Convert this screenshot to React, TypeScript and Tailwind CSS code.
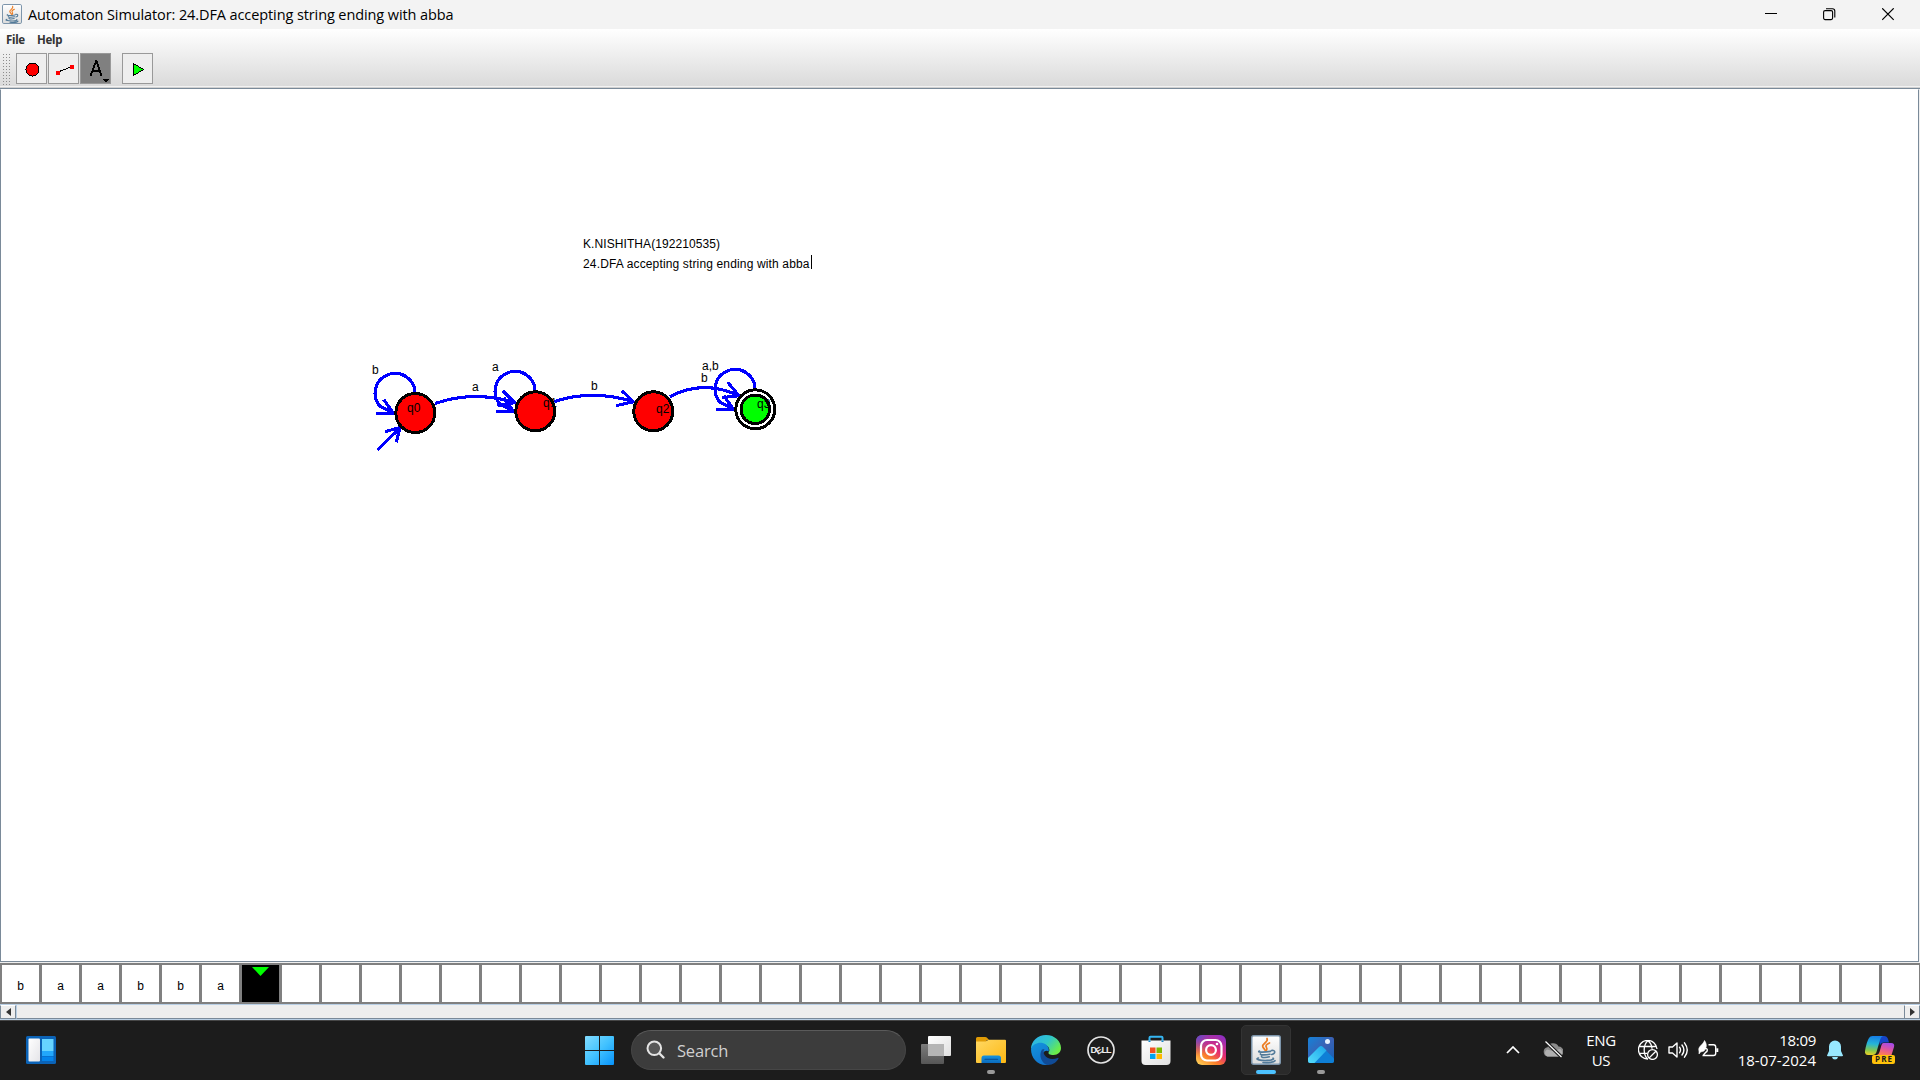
import React from "react";

const ui = "font-['Open_Sans','Noto_Sans',sans-serif]";
const tape = ["b", "a", "a", "b", "b", "a"];

function JavaCup({ size }: { size: number }) {
  return (
    <svg width={size} height={size} viewBox="0 0 30 30" className="shrink-0">
      <defs>
        <linearGradient id="javaBg" x1="0" y1="0" x2="0" y2="1">
          <stop offset="0" stopColor="#ffffff" />
          <stop offset="1" stopColor="#dcdcdc" />
        </linearGradient>
      </defs>
      <rect x=".75" y=".75" width="28.5" height="28.5" rx="2" fill="url(#javaBg)" stroke="#7d95ab" strokeWidth="1.5" />
      <g fill="none" stroke="#ec7d23" strokeWidth="1.7" strokeLinecap="round">
        <path d="M16 3.5c2 3.5-5 5-4.300 8 .3 1.500 2 2.500 2.600 4" />
        <path d="M18.500 8c-3 1.500-4.500 2.500-3 4.500.8 1 .5 2-.2 3" />
      </g>
      <g fill="none" stroke="#527a99" strokeWidth="1.6" strokeLinecap="round">
        <path d="M8.500 16c-3 1.200 3 1.700 11 .4M20.500 15.500c4-.8 4.500 3 .3 4" />
        <path d="M9.500 18.800c-1 1.400 5 1.400 9.500.4M10.500 21.300c-.5 1.600 5 1.400 7.800.5" />
        <path d="M7.500 23c-5 1.500 3 2.700 9 2.400 5-.2 7-1.200 5.500-2.200M12 27.500c5 .5 11-.3 12-1.800" />
      </g>
    </svg>
  );
}

function TitleBar() {
  return (
    <header className={`flex h-[29px] shrink-0 items-start bg-[#f3f3f3] pl-[2px] pt-[4px] text-black ${ui}`}>
      <JavaCup size={20} />
      <span className="ml-[6px] w-[428px] whitespace-nowrap pt-px text-[14.500px] leading-[20px] tracking-[-0.1px]">
        Automaton Simulator: 24.DFA accepting string ending with abba
      </span>
      <div className="ml-auto flex items-center pr-[25px] pt-[4px]">
        <svg width="13" height="13" className="mr-[45px]"><path d="M0 5.500h12" stroke="#000" strokeWidth="1" /></svg>
        <svg width="13" height="13" className="mr-[46px]" fill="none" stroke="#000" strokeWidth="1.100">
          <rect x=".6" y="2.600" width="9" height="9" rx="1.500" />
          <path d="M3 .7h6.500q2.300 0 2.300 2.300v6.500" />
        </svg>
        <svg width="13" height="13"><path d="M.2.3l11.500 11.500M11.700.3L.2 11.800" stroke="#000" strokeWidth="1.200" /></svg>
      </div>
    </header>
  );
}

function Tool({ active, children }: { active?: boolean; children: React.ReactNode }) {
  return (
    <button className={`h-[31px] w-[31px] border border-[#999999] ${active ? "bg-[#808080]" : "bg-[#eeeeee]"}`}>
      <svg width="29" height="29" shapeRendering="crispEdges">{children}</svg>
    </button>
  );
}

function Toolbar() {
  return (
    <div className="flex h-[60px] shrink-0 flex-col border-b border-[#7a8a99] bg-gradient-to-b from-white to-[#d9d9d9]">
      <nav className="flex h-[24px] gap-[12px] pl-[6px] pt-px font-['Noto_Sans','Open_Sans',sans-serif] text-[11.500px] font-bold leading-[20px] tracking-[-0.3px] text-[#333333]">
        <span className="w-[19px]">File</span>
        <span>Help</span>
      </nav>
      <div className="flex h-[32px] pl-[2px]">
        <div className="mr-[4px] h-[32px] w-[10px] bg-[radial-gradient(#8d8d8d_0.7px,transparent_0.8px)] bg-[size:3px_3px]" />
        <div className="flex gap-px">
          <Tool>
            <circle cx="15.500" cy="15.500" r="6.500" fill="#f00" stroke="#000" />
          </Tool>
          <Tool>
            <path d="M9 18L22 13" stroke="#000" />
            <path d="M7 17h4v4H7zM21 11h4v4h-4z" fill="#f00" />
          </Tool>
          <Tool active>
            <path d="M9.500 22L15 7h.5L20.500 22M11.500 17h7" stroke="#000" strokeWidth="1.700" fill="none" />
            <path d="M22 25h6l-2 3h-2z" fill="#000" />
          </Tool>
        </div>
        <div className="ml-[11px]">
          <Tool>
            <path d="M10.500 9.500v12L20.500 15.500z" fill="#0f0" stroke="#000" />
          </Tool>
        </div>
      </div>
      <div className="mt-px h-px bg-[#f2f2f2]" />
      <div className="h-px bg-[#d0d0d0]" />
    </div>
  );
}

function Loop({ x, y }: { x: number; y: number }) {
  return (
    <path d={`M${x + 0.5} ${y - 19.500}A20 20 0 1 0 ${x - 34.5} ${y - 6.500}L${x - 21} ${y + 0.3}M${x - 39} ${y + 0.3}h18L${x - 31} ${y - 13.500}`} />
  );
}

function Diagram() {
  return (
    <svg width="1918" height="871" viewBox="1 90 1918 871" className="block">
      <g fill="none" stroke="#00f" strokeWidth="3.100" strokeLinejoin="round" shapeRendering="crispEdges">
        <Loop x={414.6} y={413} />
        <Loop x={534.6} y={411} />
        <Loop x={754.6} y={409} />
        <path d="M435 403.500Q474 390 515 402.700M502.500 390.700L515 402.700L497.500 405.500" />
        <path d="M554.500 401.500Q593 389 633.500 401.700M621.700 390.700L633.500 401.700L616 405.700" />
        <path d="M670 396.700Q703 379 739 395.700M727.700 382.300L739 395.700L722 397.700" />
        <path d="M377.300 450L400 428M385 431.700L400 427.500L396.300 442.300" />
      </g>
      <g fill="#f00" stroke="#000" strokeWidth="3" shapeRendering="crispEdges">
        <circle cx="415.300" cy="413" r="19.500" />
        <circle cx="535.300" cy="411.300" r="19.500" />
        <circle cx="653.300" cy="411.300" r="19.500" />
        <circle cx="755.300" cy="409.300" r="19.500" fill="#fff" />
        <circle cx="755.300" cy="409.300" r="14.300" fill="#0f0" />
      </g>
      <g className="font-['Liberation_Sans',Arial,sans-serif] text-[12px]" fill="#000">
        <text x="372" y="374">b</text>
        <text x="492" y="371">a</text>
        <text x="472" y="391">a</text>
        <text x="591" y="390">b</text>
        <text x="702" y="370">a,b</text>
        <text x="701" y="382">b</text>
        <text x="407" y="412">q0</text>
        <text x="543" y="407" textLength="14">q1</text>
        <text x="656" y="413">q2</text>
        <text x="757" y="408">q3</text>
        <text x="583" y="248" textLength="137">K.NISHITHA(192210535)</text>
        <text x="583" y="268" textLength="226.500">24.DFA accepting string ending with abba</text>
        <path d="M811 255h1v14h-1z" />
      </g>
    </svg>
  );
}

function Tape() {
  return (
    <div className="flex h-[41px] shrink-0 overflow-hidden bg-[#808080] py-[2px] pl-[2px]">
      {Array.from({ length: 48 }, (_, i) => (
        <div
          key={i}
          className={`mr-[3px] flex h-[37px] w-[37px] shrink-0 justify-center font-['Liberation_Sans',Arial,sans-serif] text-[12px] leading-[42px] text-black ${i === 6 ? "bg-black" : "bg-white"}`}
        >
          {i === 6 ? (
            <svg width="17" height="9" className="mt-[2px]"><path d="M0 0h17L8.500 9z" fill="#0f0" /></svg>
          ) : (
            tape[i]
          )}
        </div>
      ))}
    </div>
  );
}

function ScrollBar() {
  return (
    <div className="flex h-[16px] shrink-0 border-b border-t border-[#b8cfe5] bg-[#eeeeee]">
      <div className="flex w-[16px] items-center justify-center border border-b-[#7a8a99] border-l-[#7a8a99] border-r-[#7a8a99] border-t-white">
        <svg width="5" height="8"><path d="M5 0v8L0 4z" fill="#333" /></svg>
      </div>
      <div className="flex-1 border-b border-l border-b-[#7a8a99] border-l-[#b8cfe5]" />
      <div className="flex w-[16px] items-center justify-center border border-b-[#7a8a99] border-l-[#7a8a99] border-r-[#7a8a99] border-t-white">
        <svg width="5" height="8"><path d="M0 0v8l5-4z" fill="#333" /></svg>
      </div>
    </div>
  );
}

function Slot({ children, mark }: { children: React.ReactNode; mark?: boolean }) {
  return (
    <div className="relative flex w-[55px] items-center justify-center pb-px">
      {children}
      {mark && <div className="absolute bottom-[6px] h-[4px] w-[8px] rounded-full bg-[#999999]" />}
    </div>
  );
}

function Taskbar() {
  return (
    <footer className={`flex h-[60px] shrink-0 border-t border-[#464646] bg-[#1c1c1c] text-white ${ui}`}>
      <div className="flex w-[572px] items-center pb-px pl-[26px]">
        <svg width="30" height="28">
          <defs>
            <linearGradient id="widgetPane" x1="0" y1="0" x2="1" y2="1"><stop stopColor="#fff" /><stop offset="1" stopColor="#e4e4e8" /></linearGradient>
          </defs>
          <rect width="30" height="28" rx="1.500" fill="#0b63b7" />
          <rect x="2.500" y="2.500" width="11.500" height="23" rx="1" fill="url(#widgetPane)" />
          <path d="M16 3h11.500v12H16z" fill="#66d4ff" />
          <path d="M16 15h11.500v5H16z" fill="#22a7fb" />
          <path d="M16 20.500h11.500V25H16z" fill="#0483ea" />
        </svg>
      </div>
      <Slot>
        <svg width="29" height="29">
          <defs>
            <linearGradient id="winBlue" gradientUnits="userSpaceOnUse" x1="0" y1="0" x2="29" y2="29"><stop stopColor="#82dcff" /><stop offset=".5" stopColor="#42c2ff" /><stop offset="1" stopColor="#0793fb" /></linearGradient>
          </defs>
          <path fill="url(#winBlue)" d="M0 1q0-1 1-1h13v14H0zM15 0h13q1 0 1 1v13H15zM0 15h14v14H1q-1 0-1-1zM15 15h14v13q0 1-1 1H15z" />
        </svg>
      </Slot>
      <div className="ml-[4px] mr-[2px] mt-[9px] flex h-[40px] w-[275px] items-center rounded-full border border-[#464646] border-t-[#5a5a5a] bg-[#3c3c3c] pl-[14px]">
        <svg width="20" height="20" fill="none" strokeLinecap="round">
          <circle cx="8.300" cy="8.300" r="6.800" stroke="#e4e4e4" strokeWidth="2" fill="#575757" />
          <path d="M13.500 13.500l4 4" stroke="#e4e4e4" strokeWidth="2.400" />
        </svg>
        <span className="ml-[11px] pt-px text-[16.500px] leading-[38px] tracking-[-0.2px] text-[#d0d0d0]">Search</span>
      </div>
      <Slot>
        <svg width="30" height="28">
          <defs>
            <linearGradient id="tvBack" x1="0" y1="0" x2="0" y2="1"><stop stopColor="#7c7c7c" /><stop offset="1" stopColor="#565656" /></linearGradient>
            <linearGradient id="tvFront" x1="0" y1="0" x2="1" y2="1"><stop stopColor="#fff" /><stop offset="1" stopColor="#e0e0e0" /></linearGradient>
          </defs>
          <rect y="8" width="23" height="20" rx="1" fill="url(#tvBack)" />
          <rect x="7" width="23" height="20" rx="1" fill="url(#tvFront)" />
          <path d="M7 8h16v12H7z" fill="#b5b5b5" />
        </svg>
      </Slot>
      <Slot mark>
        <svg width="30" height="28">
          <defs>
            <linearGradient id="folder" x1="0" y1="0" x2="1" y2="1"><stop stopColor="#ffd863" /><stop offset="1" stopColor="#fdb813" /></linearGradient>
            <linearGradient id="folderBlue" x1="0" y1="0" x2="0" y2="1"><stop stopColor="#1593e0" /><stop offset="1" stopColor="#0b6bbd" /></linearGradient>
          </defs>
          <path d="M0 2.500Q0 1 1.500 1H9q1.500 0 2.500 1.200L13 4h-2L9 7H0z" fill="#e09b06" />
          <path d="M0 5.500h9.500l3-1.800H29q1 0 1 1V26q0 1-1 1H1q-1 0-1-1z" fill="url(#folder)" />
          <path d="M5.500 27v-5q0-2.500 2.500-2.500h14.500Q25 19.500 25 22v5z" fill="url(#folderBlue)" />
          <path d="M9 23.300h12.500" stroke="#07569f" strokeWidth="1.300" strokeLinecap="round" />
        </svg>
      </Slot>
      <Slot>
        <svg width="30" height="30" viewBox="0 0 30 30">
          <defs>
            <linearGradient id="edgeTop" x1="0" y1="0" x2="1" y2=".6"><stop stopColor="#2baef0" /><stop offset=".55" stopColor="#30c6c9" /><stop offset="1" stopColor="#6bed48" /></linearGradient>
            <linearGradient id="edgeLow" x1="0" y1="0" x2=".5" y2="1"><stop stopColor="#1295dd" /><stop offset="1" stopColor="#1275cf" /></linearGradient>
          </defs>
          <path d="M0 14C0 6 7 0 15 0c9 0 15 6.500 15 13 0 4-3 7-7.500 7-4 0-5.500-1.500-5-2.500 1.800-2 1-5.800-3-7.500C9 8 3 9 0 14z" fill="url(#edgeTop)" />
          <path d="M0 14C2 8 10 6 15 9.500c2.500 2 3.500 5 2.300 7.200-.8-2-5.300-1-6 3.300C10.500 25 14 29 18.500 29.500 8 32 0 24 0 14z" fill="url(#edgeLow)" />
          <path d="M11 14.500C7 20 11 29.500 17 30c5 0 9-3.500 10.500-6.500.3-.8-.3-1-1-.6C22 25 16 24 13.500 20c-1.300-2-1.200-4 0-6z" fill="#104b96" />
        </svg>
      </Slot>
      <Slot>
        <svg width="30" height="30">
          <circle cx="15" cy="15" r="13" fill="none" stroke="#e4e4e4" strokeWidth="1.700" />
          <g className="font-['Liberation_Sans',sans-serif] text-[9px] font-bold" fill="#eee">
            <text x="4.500" y="18.300">D</text>
            <text x="10" y="18.300" transform="rotate(-32 13.500 15.500)">E</text>
            <text x="15.500" y="18.300" textLength="10">LL</text>
          </g>
        </svg>
      </Slot>
      <Slot>
        <svg width="30" height="30">
          <path d="M8.500 7V2.800q0-1 1-1h11q1 0 1 1V7" fill="none" stroke="#35b6f2" strokeWidth="2" />
          <path d="M.5 5.500h29V26q0 4-4 4H4.500q-4 0-4-4z" fill="url(#tvFront)" />
          <path d="M7.500 5.500h2V7h-2zM20.500 5.500h2V7h-2z" fill="#1884c4" />
          <path d="M9 12.500h5.500V18H9z" fill="#f25022" />
          <path d="M15.500 12.500H21V18h-5.500z" fill="#7fba00" />
          <path d="M9 18.800h5.500v5.200H9z" fill="#00a4ef" />
          <path d="M15.500 18.800H21v5.200h-5.500z" fill="#ffb900" />
        </svg>
      </Slot>
      <Slot>
        <svg width="30" height="30">
          <defs>
            <linearGradient id="igA" x1=".1" y1="1" x2=".8" y2="0"><stop stopColor="#ffd35a" /><stop offset=".3" stopColor="#fb8128" /><stop offset=".6" stopColor="#e42c73" /><stop offset="1" stopColor="#8f2fc0" /></linearGradient>
            <radialGradient id="igB" cx="0" cy="0" r=".7"><stop stopColor="#4655d8" /><stop offset="1" stopColor="#8f2fc0" stopOpacity="0" /></radialGradient>
          </defs>
          <rect width="30" height="30" rx="6" fill="url(#igA)" />
          <rect width="30" height="30" rx="6" fill="url(#igB)" />
          <g fill="none" stroke="#fff" strokeWidth="2.200"><rect x="5" y="5" width="20.500" height="20.500" rx="6" /><circle cx="15" cy="15" r="4.900" /></g>
          <circle cx="21" cy="9" r="1.300" fill="#fff" />
        </svg>
      </Slot>
      <Slot>
        <div className="relative flex h-[50px] w-[50px] items-center justify-center rounded-[5px] border border-[#333333] bg-[#2a2a2a]">
          <JavaCup size={30} />
          <div className="absolute bottom-0 h-[4px] w-[20px] rounded-full bg-[#4cc2ff]" />
        </div>
      </Slot>
      <Slot mark>
        <svg width="26" height="26">
          <defs>
            <linearGradient id="photoBg" x1="0" y1="0" x2="1" y2="1"><stop stopColor="#1482d8" /><stop offset=".5" stopColor="#3b61b4" /><stop offset="1" stopColor="#1260b4" /></linearGradient>
            <linearGradient id="photoHill" x1="0" y1="1" x2="1" y2="0"><stop stopColor="#55dcfb" /><stop offset="1" stopColor="#1ba6ea" /></linearGradient>
          </defs>
          <rect width="26" height="26" rx="2.500" fill="url(#photoBg)" />
          <path d="M1 25L11 10.500q2-2 4 0L26 21.500V24q0 2-2 2H2z" fill="#0e7fd6" />
          <path d="M0 21L11 10q2-2 4 0l3.500 3.500L6.500 26H2q-2 0-2-2z" fill="url(#photoHill)" />
          <circle cx="19.500" cy="4.500" r="2.500" fill="#e5f2ff" />
        </svg>
      </Slot>
      <div className="ml-auto flex items-center pb-[2px] pr-[25px]">
        <svg width="14" height="8" className="mr-[23px]"><path d="M1 7l6-6 6 6" fill="none" stroke="#fff" strokeWidth="1.700" /></svg>
        <svg width="20" height="17" className="mr-[20px]">
          <path d="M5 15.500a4.700 4.700 0 0 1-.5-9.300A6 6 0 0 1 15.500 5.500 5 5 0 0 1 15.500 15.500z" fill="#8c8c8c" />
          <path d="M4 15.500a4 4 0 0 1 0-7l6 1.500 7-2a4 4 0 0 1-1.500 7.500z" fill="#b0b0b0" />
          <path d="M2.500.5l16 15.500" stroke="#1c1c1c" strokeWidth="3.500" /><path d="M2.500.5l16 15.500" stroke="#fff" strokeWidth="1.200" />
        </svg>
        <div className="mr-[19px] w-[36px] text-center text-[15px] leading-[20px] tracking-[-0.3px]">ENG<br />US</div>
        <svg width="20" height="20" className="mr-[10px]" fill="none" stroke="#fff" strokeWidth="1.300">
          <path d="M10 19A9.300 9.300 0 1 1 19 9M1.500 6.500h17M1.500 13.300H9M9.500 19C5 14 5 5 10 .8c3 2.500 4 5.500 4 8" />
          <circle cx="14.500" cy="14.500" r="4.900" fill="#1c1c1c" /><path d="M11.200 17.900l6.700-6.700" />
        </svg>
        <svg width="20" height="20" className="mr-[10px]" fill="none" stroke="#fff" strokeWidth="1.400" strokeLinejoin="round" strokeLinecap="round">
          <path d="M1 7h3.500L9 3v14l-4.500-4H1zM11.500 7.200q2 2.800 0 5.600M14 5q3.800 5 0 10M16.500 2.800q5.500 7.200 0 14.400" />
        </svg>
        <svg width="21" height="20" className="mr-[18px]" fill="none" stroke="#fff" strokeWidth="1.400">
          <path d="M10.500 4.700h5q2.200 0 2.200 2.200v6.400q0 2.200-2.200 2.200H4.500" />
          <path d="M19.300 8.300v3.700" strokeWidth="2" />
          <path d="M1 11C-.5 6.500 5 5 6.500 .5c2.500 3.500 2.500 7-.5 10.500L2.500 12 1 14z" fill="#fff" strokeWidth=".6" />
          <path d="M7 8.500C10 8 10 11.500 7.500 12.500L5.500 15" />
        </svg>
        <div className="mr-[11px] w-[79px] text-right text-[15px] leading-[20px]">
          <span className="tracking-[-0.3px]">18:09</span>
          <div className="flex justify-end whitespace-nowrap">18-07-2024</div>
        </div>
        <svg width="16" height="20" className="mr-[22px]" fill="#98e8ff">
          <path d="M8 .5a6 6 0 0 1 6 6v4.500l2 4.500q0 .8-1 .8H1q-1 0-1-.8L2 11V6.500a6 6 0 0 1 6-6zM5 17h6q-.5 2.500-3 2.500T5 17z" />
        </svg>
        <svg width="30" height="30" className="mt-px">
          <defs>
            <linearGradient id="copA" x1=".3" y1="0" x2=".2" y2="1"><stop stopColor="#1680e6" /><stop offset=".4" stopColor="#25b5d7" /><stop offset=".75" stopColor="#86c84b" /><stop offset="1" stopColor="#f0cf24" /></linearGradient>
            <linearGradient id="copB" x1=".7" y1="0" x2=".3" y2="1"><stop stopColor="#a44bea" /><stop offset=".5" stopColor="#e0559f" /><stop offset="1" stopColor="#ff8050" /></linearGradient>
          </defs>
          <path d="M13 1h6q3 0 4 3l1 3.500h-5q-3 0-4 3z" fill="#1544c8" />
          <path d="M7.500 1H18q-2 .5-3 4l-3.500 12q-1 3-4 3H3q-3.500 0-3-4Q1.500 7 4 3q1-2 3.500-2z" fill="url(#copA)" />
          <path d="M18.500 8H26q4 0 3 4l-2.500 8H12q1.500 0 2.500-3l2-7q.5-2 2-2z" fill="url(#copB)" />
          <rect x="7" y="20" width="23" height="9" rx="2" fill="#ffc20a" />
          <text x="10" y="27.300" textLength="17" className="font-['Open_Sans',sans-serif] text-[8px] font-bold" fill="#1c1c1c">PRE</text>
        </svg>
      </div>
    </footer>
  );
}

export default function App() {
  return (
    <div className="flex h-[1080px] w-[1920px] flex-col overflow-hidden bg-[#eeeeee]">
      <TitleBar />
      <Toolbar />
      <main className="h-[874px] shrink-0 bg-[#eeeeee] pb-px pr-px">
        <div className="h-[873px] overflow-hidden border border-[#7a8a99] border-t-white bg-white">
          <Diagram />
        </div>
      </main>
      <Tape />
      <ScrollBar />
      <Taskbar />
    </div>
  );
}
